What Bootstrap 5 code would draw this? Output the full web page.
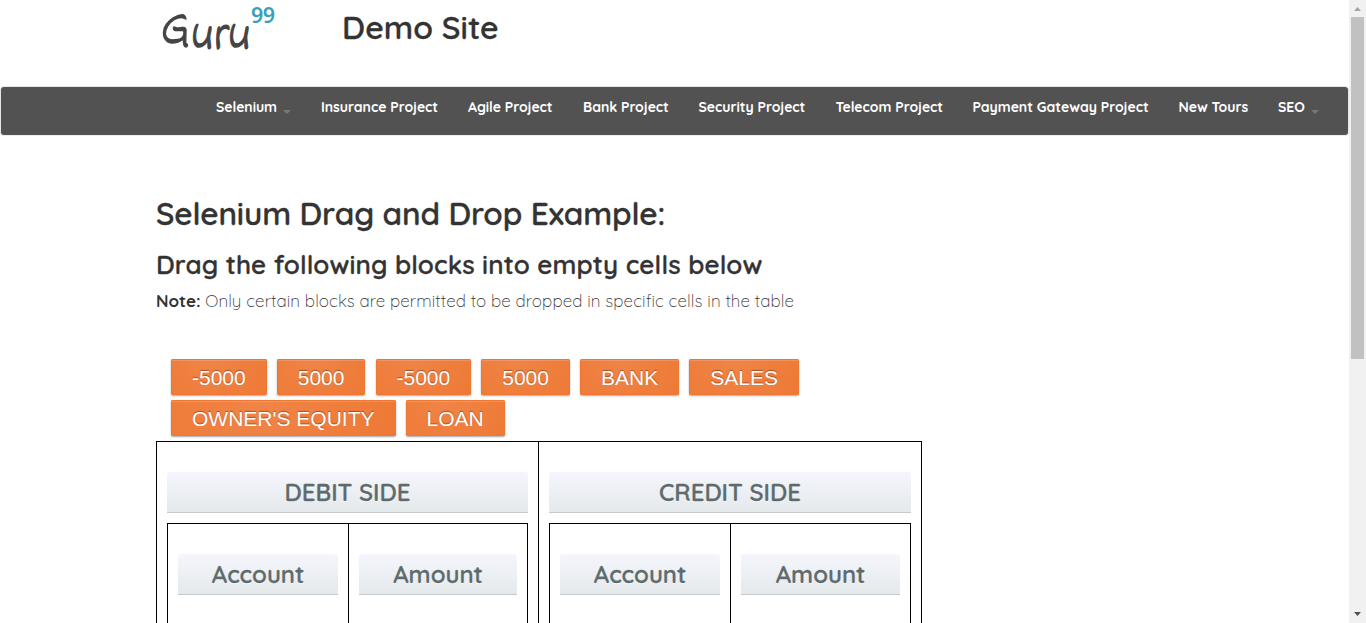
<!DOCTYPE html>
<html lang="en">
<head>
<meta charset="utf-8">
<title>Demo Site</title>
<meta name="viewport" content="width=device-width, initial-scale=1">
<link href="https://cdn.jsdelivr.net/npm/bootstrap@5.3.0/dist/css/bootstrap.min.css" rel="stylesheet">
<style>
body{font-family:Quicksand,Lato,sans-serif;color:#333;background:#fff;height:100vh;overflow:hidden}
.page-view{width:1349px;min-width:0}
.site-head{height:86px;padding-left:161px}
.site-title{font-size:32px;font-weight:600;line-height:36px;margin:9px 0 0 65px}
.site-title,.h-main,.h-sub,.bar-title{-webkit-text-stroke:.3px currentColor}
.site-nav{height:50px;background:#525252;border:1px solid #e4e7e7;border-bottom-color:#eee;border-radius:4px;padding:0;display:block;width:1349px}
.site-menu{display:grid;grid-template-columns:105px 147px 115px 115.5px 137px 137px 206px 99.5px 60px;padding-left:215px;margin:0;list-style:none}
.site-menu a{display:block;color:#fff;font-size:14px;font-weight:700;line-height:20px;letter-spacing:-.04px;padding:10px 0 0;white-space:nowrap;text-decoration:none}
.tick{display:inline-block;border:4px solid transparent;border-top-color:#777;border-bottom:0;margin-left:6px;vertical-align:-2px}
.content{padding:57px 0 0 156px}
.h-main{font-size:31.5px;font-weight:600;line-height:40px;letter-spacing:-.12px;margin:0 0 16px}
.h-sub{font-size:26px;font-weight:600;line-height:32px;letter-spacing:.14px;margin:0 0 9px}
.note{font-size:17px;font-weight:300;line-height:22px;letter-spacing:.1px;margin:0 0 47px;color:#333}
.note b{font-weight:700;letter-spacing:0}
.blocks{width:660px;margin-left:15px;gap:5px 10.04px}
.block{height:36px;padding:0 21px;font:400 21px/37px "Liberation Sans",Arial,sans-serif;color:#fff;border:0;border-radius:2px;background:radial-gradient(circle at 40% 0,#f08447,#ee7935);text-shadow:0 -1px 1px rgba(0,0,0,.35);box-shadow:0 1px 2px rgba(0,0,0,.35),inset 0 0 0 1px #ee7733,inset 0 2px 0 rgba(255,255,255,.17)}
.ledger{width:766px;height:400px;margin-top:5px;display:grid;grid-template-columns:381px 383px;border:1px solid #000}
.side{padding:30px 10px 0}
.side+.side{border-left:1px solid #000}
.side-cols{display:grid;grid-template-columns:180px 1fr;border:1px solid #000;height:300px;margin-top:10px}
.side-cols>div{padding:30px 10px 0}
.side-cols>div+div{border-left:1px solid #000}
.bar-title{height:41px;font-size:24px;font-weight:600;line-height:40px;text-align:center;color:#5d6b6d;background:linear-gradient(#f5f6fd,#e4e9eb);border-bottom:1px solid #c6cacd;border-radius:3px 3px 0 0;text-shadow:0 1px 0 #fff;margin:0}
.scroller{width:17px;background:#f1f1f1}
.thumb{width:13px;height:342px;background:#c1c1c1}
</style>
</head>
<body class="d-flex">
<main class="page-view flex-shrink-0 overflow-hidden">
<header class="site-head d-flex align-items-start">
<svg width="116" height="56" viewBox="0 0 116 56" overflow="visible" role="img" aria-label="Guru99">
<g fill="#444" stroke="#444" stroke-width="1.300" font-family="'Indie Flower','Shadows Into Light','Gloria Hallelujah','Architects Daughter',Caveat,'Patrick Hand',Lato,sans-serif">
<text x="0" y="43" font-size="55" textLength="29" lengthAdjust="spacingAndGlyphs">G</text>
<text x="27" y="48.500" font-size="53" font-style="italic" textLength="61" lengthAdjust="spacingAndGlyphs">uru</text>
</g>
<text x="90" y="22.500" font-size="21.5" font-weight="600" font-family="Noto Sans,sans-serif" fill="#3b9fb8" textLength="24">99</text>
</svg>
<h1 class="site-title">Demo Site</h1>
</header>
<nav class="navbar site-nav">
<ul class="site-menu">
<li><a href="#">Selenium<i class="tick"></i></a></li>
<li><a href="#">Insurance Project</a></li>
<li><a href="#">Agile Project</a></li>
<li><a href="#">Bank Project</a></li>
<li><a href="#">Security Project</a></li>
<li><a href="#">Telecom Project</a></li>
<li><a href="#">Payment Gateway Project</a></li>
<li><a href="#">New Tours</a></li>
<li><a href="#">SEO<i class="tick"></i></a></li>
</ul>
</nav>
<section class="content">
<h2 class="h-main">Selenium Drag and Drop Example:</h2>
<h3 class="h-sub">Drag the following blocks into empty cells below</h3>
<p class="note"><b>Note:</b> Only certain blocks are permitted to be dropped in specific cells in the table</p>
<div class="blocks d-flex flex-wrap">
<a class="btn block">-5000</a><a class="btn block">5000</a><a class="btn block">-5000</a><a class="btn block">5000</a><a class="btn block">BANK</a><a class="btn block">SALES</a><a class="btn block">OWNER'S EQUITY</a><a class="btn block">LOAN</a>
</div>
<div class="ledger">
<div class="side">
<h3 class="bar-title">DEBIT SIDE</h3>
<div class="side-cols"><div><h3 class="bar-title">Account</h3></div><div><h3 class="bar-title">Amount</h3></div></div>
</div>
<div class="side">
<h3 class="bar-title">CREDIT SIDE</h3>
<div class="side-cols"><div><h3 class="bar-title">Account</h3></div><div><h3 class="bar-title">Amount</h3></div></div>
</div>
</div>
</section>
</main>
<aside class="scroller d-flex flex-column align-items-center flex-shrink-0" aria-hidden="true">
<svg width="17" height="17" viewBox="0 0 17 17" class="flex-shrink-0"><path d="M5 11L8.500 7 12 11z" fill="#a3a3a3"/></svg>
<div class="thumb flex-shrink-0"></div>
<svg width="17" height="17" viewBox="0 0 17 17" class="mt-auto flex-shrink-0"><path d="M5 6L8.500 10 12 6z" fill="#505050"/></svg>
</aside>
<script src="https://cdn.jsdelivr.net/npm/bootstrap@5.3.0/dist/js/bootstrap.bundle.min.js"></script>
</body>
</html>
